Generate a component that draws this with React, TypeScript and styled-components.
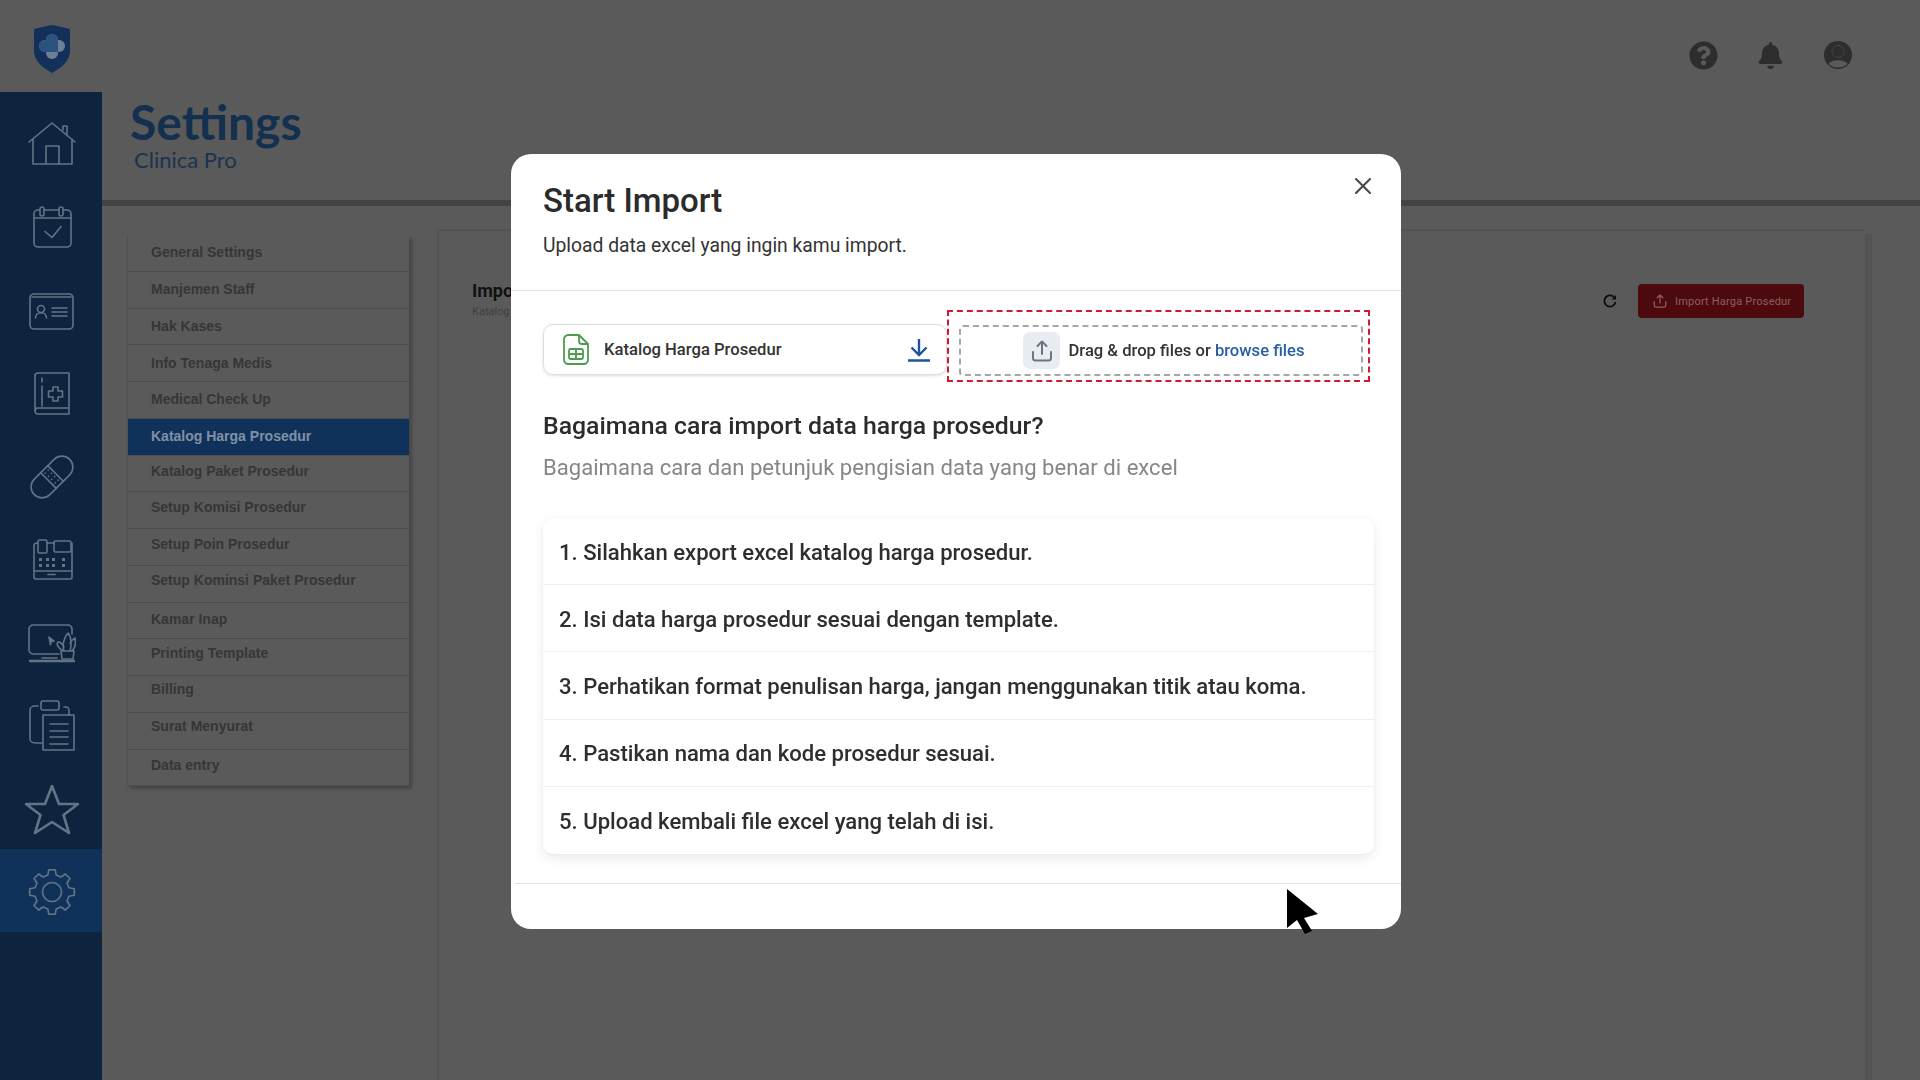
import { createGlobalStyle, styled } from "styled-components";
import { X } from "lucide-react";
import { FaBell, FaQuestionCircle } from "react-icons/fa";
import type { ReactNode } from "react";

const GlobalStyle = createGlobalStyle`
  html, body {
    margin: 0;
    background: #5a5a5a;
    overflow: hidden;
  }
  * {
    box-sizing: border-box;
  }
`;

const Shell = styled.div`
  width: 1920px;
  height: 1080px;
  display: flex;
  flex-direction: column;
  overflow: hidden;
  background: #5a5a5a;
  font-family: Roboto, "Liberation Sans", sans-serif;
`;

const TopBar = styled.header`
  height: 92px;
  flex: none;
  display: flex;
  align-items: flex-start;
  justify-content: space-between;
  padding: 25px 67px 0 33px;
`;

const TopIcons = styled.div`
  display: flex;
  align-items: center;
  gap: 39px;
  margin-top: 15px;
  color: #2d2d2d;
`;

const Workspace = styled.div`
  flex: 1;
  min-height: 0;
  display: flex;
`;

const SideBar = styled.nav`
  width: 102px;
  flex: none;
  padding-top: 10px;
  background: #0e233d;
`;

const SideItem = styled.div<{ $active?: boolean }>`
  height: 83px;
  padding: 2px 0 0 2px;
  display: flex;
  align-items: center;
  justify-content: center;
  background: ${(p) => (p.$active ? "#10325a" : "transparent")};

  svg {
    display: block;
    fill: none;
    stroke: #647487;
    stroke-width: 1.6;
    stroke-linejoin: round;
    stroke-linecap: round;
  }
`;

const Main = styled.main`
  flex: 1;
  min-width: 0;
  display: flex;
  flex-direction: column;
`;

const PageHead = styled.div`
  height: 108px;
  padding: 5px 0 0 28px;
`;

const PageTitle = styled.h1`
  margin: 0;
  font-family: Lato, sans-serif;
  font-size: 48px;
  line-height: 50px;
  font-weight: 700;
  color: #14304f;
`;

const PageSubtitle = styled.div`
  margin: 0 0 0 4px;
  font-family: Lato, sans-serif;
  font-size: 22px;
  line-height: 26px;
  font-weight: 400;
  color: #1b3450;
`;

const HeadRule = styled.div`
  height: 6px;
  flex: none;
  background: #434343;
`;

const Body = styled.div`
  flex: 1;
  min-height: 0;
  display: flex;
  align-items: stretch;
  gap: 28px;
  padding: 23px 55px 0 25px;
`;

const SettingsMenu = styled.ul`
  width: 282px;
  flex: none;
  align-self: flex-start;
  margin: 6px 0 0;
  padding: 0;
  list-style: none;
  border-left: 1px solid #525252;
  box-shadow: 3px 3px 3px #464646;
`;

const MenuRow = styled.li<{ $active?: boolean; $lift: number }>`
  height: 36.75px;
  display: flex;
  align-items: center;
  padding: 0 0 ${(p) => p.$lift}px 23px;
  border-bottom: 1px solid #4d4d4d;
  font-family: "Liberation Sans", Arial, sans-serif;
  font-size: 14px;
  font-weight: 700;
  background: ${(p) => (p.$active ? "#10325a" : "transparent")};
  color: ${(p) => (p.$active ? "#8091a6" : "#363636")};
`;

const ContentPanel = styled.section`
  flex: 1;
  min-width: 0;
  display: flex;
  align-items: flex-start;
  justify-content: space-between;
  padding: 49px 61px 0 33px;
  border-top: 2px solid #525252;
  border-left: 2px solid #525252;
  box-shadow: 7px 5px 0 #535353;
`;

const PanelTitle = styled.div`
  font-size: 18px;
  line-height: 22px;
  font-weight: 700;
  color: #111;
`;

const PanelCaption = styled.div`
  font-size: 11px;
  line-height: 14px;
  margin-top: 3px;
  color: #3f3f3f;
`;

const PanelActions = styled.div`
  display: flex;
  align-items: center;
  gap: 21px;
  padding-top: 4px;
`;

const ImportButton = styled.div`
  width: 166px;
  height: 34px;
  display: flex;
  align-items: center;
  gap: 8px;
  padding-left: 15px;
  border-radius: 4px;
  background: #4d0a0e;
  color: #8d5e61;
  font-size: 11px;
  letter-spacing: 0.2px;
`;

const ModalLayer = styled.div`
  position: fixed;
  inset: 0;
  display: flex;
  justify-content: center;
  align-items: flex-start;
  padding: 154px 8px 0 0;
`;

const Modal = styled.div`
  position: relative;
  width: 890px;
  height: 775px;
  display: flex;
  flex-direction: column;
  border-radius: 20px;
  background: #fff;
  color: #2b2b2b;
`;

const ModalHead = styled.div`
  height: 137px;
  flex: none;
  padding: 27px 32px 0;
  border-bottom: 1px solid #e2e2e2;
`;

const ModalTitle = styled.h2`
  margin: 0;
  font-size: 33px;
  line-height: 40px;
  font-weight: 500;
  color: #2b2b2b;
`;

const ModalSubtitle = styled.p`
  margin: 12px 0 0;
  font-size: 19.3px;
  line-height: 26px;
  color: #333;
`;

const CloseButton = styled.div`
  position: absolute;
  top: 18px;
  right: 24px;
  color: #4a4a4a;
  display: flex;
`;

const ModalBody = styled.div`
  flex: 1;
  padding: 19px 27px 0 32px;
`;

const UploadRow = styled.div`
  display: flex;
  align-items: flex-start;
  margin-right: 4px;
`;

const TemplateCard = styled.div`
  width: 404px;
  height: 51px;
  flex: none;
  margin-top: 14px;
  display: flex;
  align-items: center;
  padding: 0 16px 0 19px;
  border: 1px solid #dedede;
  border-radius: 10px;
  box-shadow: 0 1px 3px rgba(0, 0, 0, 0.12);
  font-size: 16.6px;
  font-weight: 500;
`;

const TemplateName = styled.span`
  flex: 1;
  margin-left: 15px;
  color: #333;
`;

const UploadMark = styled.div`
  flex: 1;
  height: 72px;
  padding: 13px 5px 4px 10px;
  border: 2px dashed #cf1b2c;
`;

const DropZone = styled.div`
  height: 51px;
  display: flex;
  align-items: center;
  justify-content: center;
  gap: 8px;
  padding-left: 6px;
  border: 2px dashed #a6a6a6;
  border-radius: 4px;
  font-size: 16.6px;
  font-weight: 500;
  color: #333;
`;

const UploadTile = styled.div`
  width: 37px;
  height: 37px;
  display: flex;
  align-items: center;
  justify-content: center;
  border-radius: 7px;
  background: #e9edf2;
`;

const BrowseLink = styled.span`
  color: #2a5ea6;
`;

const GuideTitle = styled.h3`
  margin: 29px 0 0;
  font-size: 24.8px;
  line-height: 30px;
  font-weight: 500;
  color: #2b2b2b;
`;

const GuideSubtitle = styled.p`
  margin: 12px 0 0;
  font-size: 22.1px;
  line-height: 28px;
  color: #868686;
`;

const StepList = styled.ol`
  margin: 37px 0 0;
  padding: 0;
  list-style: none;
  border-radius: 10px;
  box-shadow: 0 5px 12px rgba(0, 0, 0, 0.08), 0 0 2px rgba(0, 0, 0, 0.06);
`;

const StepRow = styled.li`
  height: 67.2px;
  display: flex;
  align-items: center;
  padding: 1px 0 0 16px;
  border-bottom: 1px solid #efefef;
  font-size: 22.1px;
  font-weight: 500;
  color: #2e2e2e;

  &:last-child {
    border-bottom: none;
  }
`;

const ModalFoot = styled.div`
  height: 46px;
  flex: none;
  margin-left: 4px;
  border-top: 1px solid #e2e2e2;
`;

const Pointer = styled.svg`
  position: fixed;
  left: 1287px;
  top: 889px;
`;

const menuItems: { label: string; lift: number; active?: boolean }[] = [
  { label: "General Settings", lift: 1 },
  { label: "Manjemen Staff", lift: 1 },
  { label: "Hak Kases", lift: 1 },
  { label: "Info Tenaga Medis", lift: 1 },
  { label: "Medical Check Up", lift: 2 },
  { label: "Katalog Harga Prosedur", lift: 1, active: true },
  { label: "Katalog Paket Prosedur", lift: 4 },
  { label: "Setup Komisi Prosedur", lift: 6 },
  { label: "Setup Poin Prosedur", lift: 6 },
  { label: "Setup Kominsi Paket Prosedur", lift: 8 },
  { label: "Kamar Inap", lift: 2 },
  { label: "Printing Template", lift: 9 },
  { label: "Billing", lift: 10 },
  { label: "Surat Menyurat", lift: 10 },
  { label: "Data entry", lift: 4 },
];

const steps = [
  "1. Silahkan export excel katalog harga prosedur.",
  "2. Isi data harga prosedur sesuai dengan template.",
  "3. Perhatikan format penulisan harga, jangan menggunakan titik atau koma.",
  "4. Pastikan nama dan kode prosedur sesuai.",
  "5. Upload kembali file excel yang telah di isi.",
];

// 8 tooth cog outline, easier to compute than to type out
const gearPath = () => {
  const teeth = 8;
  const cx = 24;
  const cy = 24;
  const outer = 22.5;
  const inner = 17.5;
  const pts: string[] = [];
  for (let i = 0; i < teeth; i++) {
    const a = (i * Math.PI * 2) / teeth - Math.PI / 2;
    const step = Math.PI / teeth;
    const corners: [number, number][] = [
      [inner, a - step * 0.62],
      [outer, a - step * 0.36],
      [outer, a + step * 0.36],
      [inner, a + step * 0.62],
    ];
    corners.forEach(([r, t]) => {
      pts.push(`${(cx + r * Math.cos(t)).toFixed(1)} ${(cy + r * Math.sin(t)).toFixed(1)}`);
    });
  }
  return `M${pts.join("L")}Z`;
};

const keyGrid = [12, 19, 25, 35].flatMap((x) => [23, 29].map((y) => ({ x, y })));

const sideIcons: ReactNode[] = [
  <svg width="48" height="48" viewBox="0 0 48 48" key="home">
    <path d="M1 21 24 2l23 19M5 18v25h39V18M18 43V25h13v18M35 9V5h4v8" />
  </svg>,
  <svg width="48" height="48" viewBox="0 0 48 48" key="calendar">
    <rect x="6" y="6" width="37" height="37" rx="4" />
    <path d="M6 14h37M17 27.500l7 6 9-11" />
    <rect x="12" y="3" width="4" height="9" rx="2" fill="#0e233d" />
    <rect x="31" y="3" width="4" height="9" rx="2" fill="#0e233d" />
  </svg>,
  <svg width="48" height="48" viewBox="0 0 48 48" key="card">
    <rect x="2" y="7" width="43" height="35" rx="4" />
    <path d="M4 10h39" />
    <circle cx="13" cy="22" r="3.500" />
    <path d="M7.500 31c0-7 11-7 11 0M24 21h15M24 25h15M24 29h15" />
  </svg>,
  <svg width="48" height="48" viewBox="0 0 48 48" key="book">
    <path d="M7 42V6c0-2 1-3 3-3h31v41H10c-2 0-3-1-3-3s1-3 3-3h31M14 8v4M14 16v20" />
    <path d="M25 17h5v4h4.500v6H30v4h-5v-4h-4.500v-6H25z" />
  </svg>,
  <svg width="48" height="48" viewBox="0 0 48 48" key="pill">
    <g transform="rotate(-45 24 24)">
      <rect x="-1" y="13" width="50" height="22" rx="11" />
      <path d="M19 13v22M29 13v22M22 16.500h.1M26 16.500h.1M22 21h.1M26 21h.1M22 25.500h.1M26 25.500h.1M22 30.500h.1M26 30.500h.1" />
    </g>
  </svg>,
  <svg width="48" height="48" viewBox="0 0 48 48" key="register">
    <path d="M10 7H9C7 7 6 8 6 10v31c0 1 1 2 2 2h34c1 0 2-1 2-2V7M19 7h7" />
    <rect x="10" y="4" width="9" height="13" rx="1.500" />
    <rect x="26" y="5" width="17" height="11" rx="1.500" />
    <path d="M6 35h38M20 38.500h7" />
    {keyGrid.map((k) => (
      <rect key={`${k.x}-${k.y}`} x={k.x - 1} y={k.y - 1} width="3" height="3" fill="#647487" stroke="none" />
    ))}
  </svg>,
  <svg width="48" height="48" viewBox="0 0 48 48" key="desktop">
    <path d="M31 35H5c-2 0-4-2-4-4V10c0-2 2-4 4-4h35c2 0 4 2 4 4v5M14 39h15" />
    <path d="M2 42h44" strokeWidth="2.400" />
    <path d="M21 18l5 4-3 .5-.5 3z" fill="#647487" />
    <path d="M33 32h13l-1 8H34zM35 32c-5-3-7-7-5-9 3 0 5 3 6 5M36 32c-2-6 0-14 4-18 3 4 4 10 2 18M44 32c3-3 4-8 3-13-2 1-4 3-5 5" />
  </svg>,
  <svg width="48" height="52" viewBox="0 0 48 52" key="clipboard">
    <path d="M10 6H7c-3 0-5 2-5 4v29c0 2 2 4 5 4h7M36 7h2c2 0 3 2 3 4v4" />
    <rect x="13" y="1" width="18" height="9" rx="2" />
    <path d="M15 15h31v35H15zM22 24h18M22 31h18M22 37h18M22 44h18" />
  </svg>,
  <svg width="56" height="52" viewBox="0 0 56 52" key="star" style={{ strokeWidth: 2.6 }}>
    <path d="M28 3l7 18h19L39.500 32l5.500 18-17-11-17 11 5.500-18L2 21h19z" />
  </svg>,
  <svg width="48" height="48" viewBox="0 0 48 48" key="gear">
    <path d={gearPath()} />
    <circle cx="24" cy="24" r="9.500" />
  </svg>,
];

const LogoMark = () => (
  <svg width="38" height="48" viewBox="0 0 38 48">
    <path d="M1 4C8 2 14 1 19 0c5 1 11 2 18 4v22c0 10-9 17-18 22C10 43 1 36 1 26z" fill="#12305a" />
    <rect x="13" y="9" width="12" height="25" rx="6" fill="#6c8096" />
    <rect x="6" y="15" width="26" height="12" rx="6" fill="#6c8096" />
    <path d="M13 15V15a6 6 0 0 1 12 0v12H12a6 6 0 0 1 0-12z" fill="#2c527f" />
  </svg>
);

const UserIcon = () => (
  <svg width="30" height="30" viewBox="0 0 30 30">
    <circle cx="15" cy="15" r="14" fill="#2d2d2d" />
    <path d="M5.500 24c3-5 16-5 19 0-2.500 2.500-6 3.500-9.500 3.500S8 26.500 5.500 24z" fill="#5a5a5a" />
    <circle cx="15" cy="11.500" r="6" fill="#2d2d2d" stroke="#454545" strokeWidth="1" />
  </svg>
);

const SheetIcon = () => (
  <svg width="26" height="31" viewBox="0 0 26 31" fill="none" stroke="#4f9b50" strokeWidth="1.8" strokeLinejoin="round">
    <path d="M5 1h11l9 9v16c0 2-2 4-4 4H5c-2 0-4-2-4-4V5c0-2 2-4 4-4z" />
    <path d="M16 1v6c0 2 1 3 3 3h6" />
    <rect x="6" y="15" width="14" height="10" rx="1.500" />
    <path d="M6 20h14M13 15v10" />
  </svg>
);

const DownloadIcon = () => (
  <svg width="22" height="24" viewBox="0 0 22 24" fill="none" stroke="#1f529f" strokeWidth="2.4">
    <path d="M11 1v15M3.500 9.500 11 17l7.500-7.500M0 22.500h22" />
  </svg>
);

const ShareIcon = ({ size, color }: { size: number; color: string }) => (
  <svg width={size} height={size} viewBox="0 0 22 22" fill="none" stroke={color} strokeWidth="2" strokeLinecap="round" strokeLinejoin="round">
    <path d="M11 14V2M6.500 6 11 1.500 15.500 6M2 12v6c0 1.500 1 2.500 2.500 2.500h13c1.500 0 2.500-1 2.500-2.500v-6" />
  </svg>
);

const RefreshIcon = () => (
  <svg width="14" height="14" viewBox="0 0 14 14" fill="none" stroke="#0c0c0c" strokeWidth="1.800">
    <path d="M12 4.500A5.600 5.600 0 1 0 12.500 8" />
    <path d="M13 1v4.500H8.500z" fill="#0c0c0c" stroke="none" />
  </svg>
);

const App = () => {
  return (
    <Shell>
      <GlobalStyle />
      <TopBar>
        <LogoMark />
        <TopIcons>
          <FaQuestionCircle size={29} />
          <FaBell size={27} />
          <UserIcon />
        </TopIcons>
      </TopBar>
      <Workspace>
        <SideBar>
          {sideIcons.map((icon, i) => (
            <SideItem key={i} $active={i === sideIcons.length - 1}>
              {icon}
            </SideItem>
          ))}
        </SideBar>
        <Main>
          <PageHead>
            <PageTitle>Settings</PageTitle>
            <PageSubtitle>Clinica Pro</PageSubtitle>
          </PageHead>
          <HeadRule />
          <Body>
            <SettingsMenu>
              {menuItems.map((item) => (
                <MenuRow key={item.label} $active={item.active} $lift={item.lift}>
                  {item.label}
                </MenuRow>
              ))}
            </SettingsMenu>
            <ContentPanel>
              <div>
                <PanelTitle>Import Harga Prosedur</PanelTitle>
                <PanelCaption>Katalog Harga Prosedur</PanelCaption>
              </div>
              <PanelActions>
                <RefreshIcon />
                <ImportButton>
                  <ShareIcon size={14} color="#8d5e61" />
                  Import Harga Prosedur
                </ImportButton>
              </PanelActions>
            </ContentPanel>
          </Body>
        </Main>
      </Workspace>

      <ModalLayer>
        <Modal>
          <CloseButton>
            <X size={28} strokeWidth={1.8} />
          </CloseButton>
          <ModalHead>
            <ModalTitle>Start Import</ModalTitle>
            <ModalSubtitle>Upload data excel yang ingin kamu import.</ModalSubtitle>
          </ModalHead>
          <ModalBody>
            <UploadRow>
              <TemplateCard>
                <SheetIcon />
                <TemplateName>Katalog Harga Prosedur</TemplateName>
                <DownloadIcon />
              </TemplateCard>
              <UploadMark>
                <DropZone>
                  <UploadTile>
                    <ShareIcon size={22} color="#6b7480" />
                  </UploadTile>
                  <span>
                    Drag &amp; drop files or <BrowseLink>browse files</BrowseLink>
                  </span>
                </DropZone>
              </UploadMark>
            </UploadRow>
            <GuideTitle>Bagaimana cara import data harga prosedur?</GuideTitle>
            <GuideSubtitle>Bagaimana cara dan petunjuk pengisian data yang benar di excel</GuideSubtitle>
            <StepList>
              {steps.map((step) => (
                <StepRow key={step}>{step}</StepRow>
              ))}
            </StepList>
          </ModalBody>
          <ModalFoot />
        </Modal>
      </ModalLayer>

      <Pointer width="32" height="45" viewBox="0 0 32 45">
        <path d="M0 0v39l10-8 8 14 7-3-8-13 14-4z" fill="#000" />
      </Pointer>
    </Shell>
  );
};

export default App;
